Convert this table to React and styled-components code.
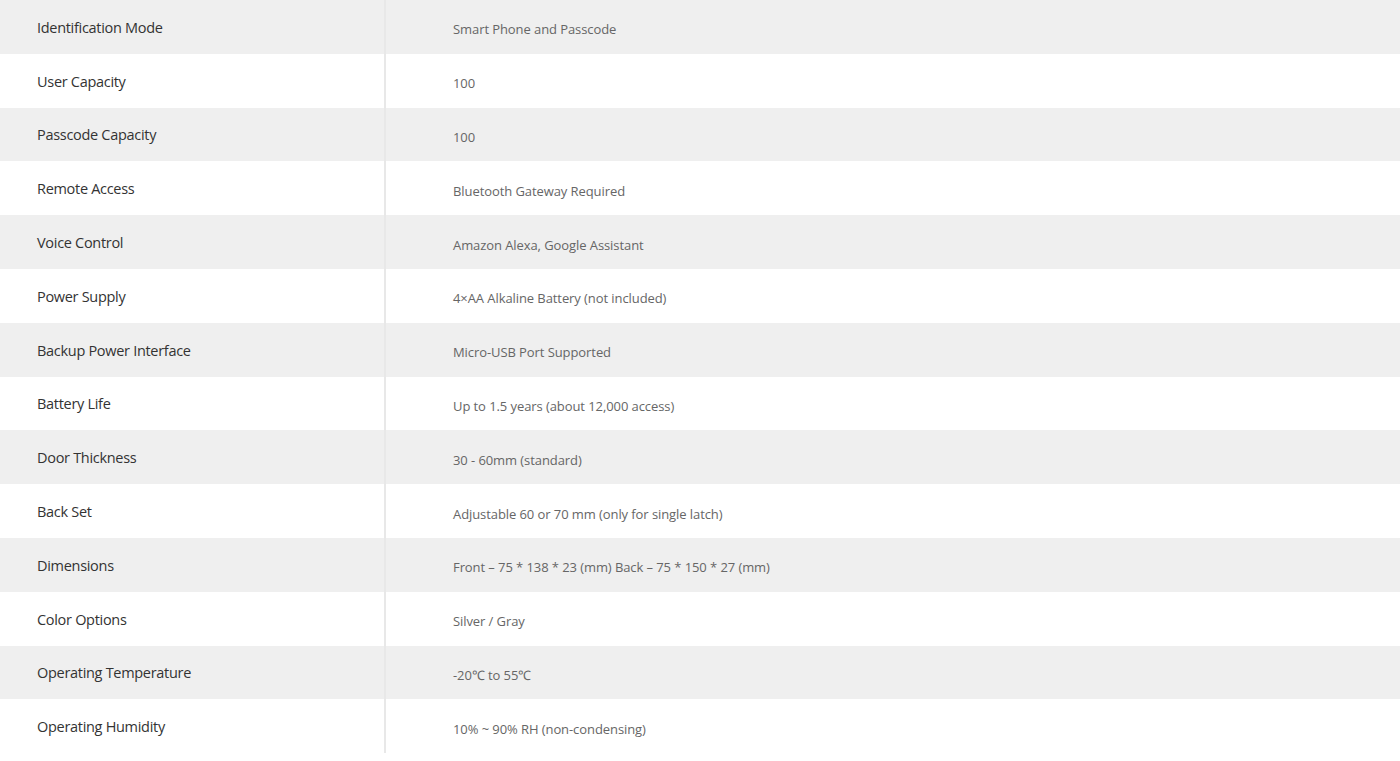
import React from "react";
import styled, { createGlobalStyle } from "styled-components";

const Global = createGlobalStyle`
  html, body { margin: 0; padding: 0; background: #fff; }
  body { font-family: "Open Sans", "Liberation Sans", sans-serif; }
`;

const Table = styled.div`
  width: 1400px;
  display: flex;
  flex-direction: column;
`;

const Row = styled.div`
  display: grid;
  grid-template-columns: 384px 2px 1fr;
  height: 53.8px;
  background: ${(p) => (p.$shaded ? "#efefef" : "#ffffff")};
`;

const Label = styled.div`
  display: flex;
  align-items: center;
  padding-left: 37px;
  padding-top: 1px;
  font-size: 14.5px;
  letter-spacing: -0.3px;
  color: #333333;
`;

const Divider = styled.div`
  background: #e8e8e8;
`;

const Value = styled.div`
  display: flex;
  align-items: center;
  padding-left: 67px;
  padding-top: 5px;
  font-size: 13px;
  letter-spacing: -0.08px;
  color: #666666;
`;

const specs = [
  ["Identification Mode", "Smart Phone and Passcode"],
  ["User Capacity", "100"],
  ["Passcode Capacity", "100"],
  ["Remote Access", "Bluetooth Gateway Required"],
  ["Voice Control", "Amazon Alexa, Google Assistant"],
  ["Power Supply", "4×AA Alkaline Battery (not included)"],
  ["Backup Power Interface", "Micro-USB Port Supported"],
  ["Battery Life", "Up to 1.5 years (about 12,000 access)"],
  ["Door Thickness", "30 - 60mm (standard)"],
  ["Back Set", "Adjustable 60 or 70 mm (only for single latch)"],
  ["Dimensions", "Front – 75 * 138 * 23 (mm) Back – 75 * 150 * 27 (mm)"],
  ["Color Options", "Silver / Gray"],
  ["Operating Temperature", "-20℃ to 55℃"],
  ["Operating Humidity", "10% ~ 90% RH (non-condensing)"],
];

export default function App() {
  return (
    <>
      <Global />
      <Table>
        {specs.map(([k, v], i) => (
          <Row key={k} $shaded={i % 2 === 0}>
            <Label>{k}</Label>
            <Divider />
            <Value>{v}</Value>
          </Row>
        ))}
      </Table>
    </>
  );
}
